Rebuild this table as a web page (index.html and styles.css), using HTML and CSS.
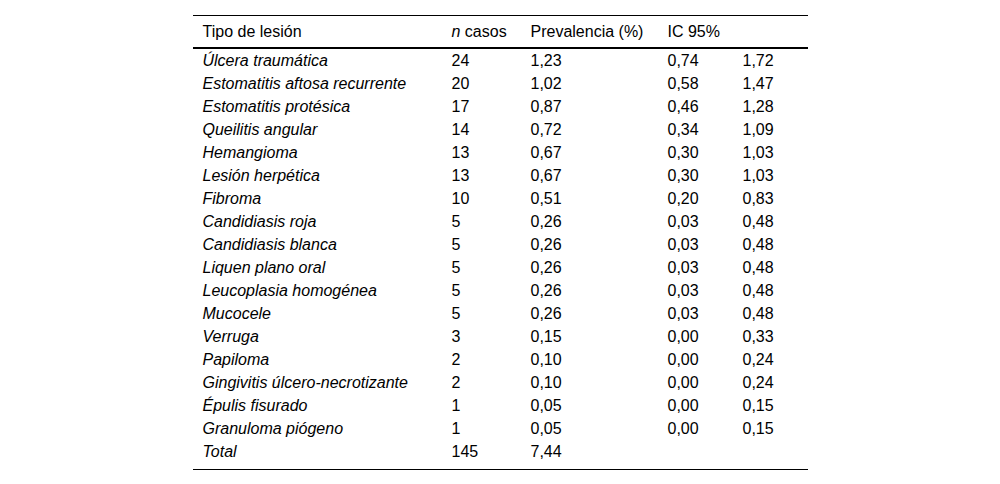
FILE: index.html
```html
<!DOCTYPE html>
<html lang="es">
<head>
<meta charset="utf-8">
<link rel="stylesheet" href="styles.css">
</head>
<body>
<table class="data">
  <colgroup>
    <col class="c1"><col class="c2"><col class="c3"><col class="c4"><col class="c5">
  </colgroup>
  <thead>
    <tr><th>Tipo de lesión</th><th><i>n</i> casos</th><th>Prevalencia (%)</th><th colspan="2">IC 95%</th></tr>
  </thead>
  <tbody>
    <tr><td class="name">Úlcera traumática</td><td>24</td><td>1,23</td><td>0,74</td><td>1,72</td></tr>
    <tr><td class="name">Estomatitis aftosa recurrente</td><td>20</td><td>1,02</td><td>0,58</td><td>1,47</td></tr>
    <tr><td class="name">Estomatitis protésica</td><td>17</td><td>0,87</td><td>0,46</td><td>1,28</td></tr>
    <tr><td class="name">Queilitis angular</td><td>14</td><td>0,72</td><td>0,34</td><td>1,09</td></tr>
    <tr><td class="name">Hemangioma</td><td>13</td><td>0,67</td><td>0,30</td><td>1,03</td></tr>
    <tr><td class="name">Lesión herpética</td><td>13</td><td>0,67</td><td>0,30</td><td>1,03</td></tr>
    <tr><td class="name">Fibroma</td><td>10</td><td>0,51</td><td>0,20</td><td>0,83</td></tr>
    <tr><td class="name">Candidiasis roja</td><td>5</td><td>0,26</td><td>0,03</td><td>0,48</td></tr>
    <tr><td class="name">Candidiasis blanca</td><td>5</td><td>0,26</td><td>0,03</td><td>0,48</td></tr>
    <tr><td class="name">Liquen plano oral</td><td>5</td><td>0,26</td><td>0,03</td><td>0,48</td></tr>
    <tr><td class="name">Leucoplasia homogénea</td><td>5</td><td>0,26</td><td>0,03</td><td>0,48</td></tr>
    <tr><td class="name">Mucocele</td><td>5</td><td>0,26</td><td>0,03</td><td>0,48</td></tr>
    <tr><td class="name">Verruga</td><td>3</td><td>0,15</td><td>0,00</td><td>0,33</td></tr>
    <tr><td class="name">Papiloma</td><td>2</td><td>0,10</td><td>0,00</td><td>0,24</td></tr>
    <tr><td class="name">Gingivitis úlcero-necrotizante</td><td>2</td><td>0,10</td><td>0,00</td><td>0,24</td></tr>
    <tr><td class="name">Épulis fisurado</td><td>1</td><td>0,05</td><td>0,00</td><td>0,15</td></tr>
    <tr><td class="name">Granuloma piógeno</td><td>1</td><td>0,05</td><td>0,00</td><td>0,15</td></tr>
    <tr class="last"><td class="name">Total</td><td>145</td><td>7,44</td><td></td><td></td></tr>
  </tbody>
</table>
</body>
</html>
```

FILE: styles.css
```css
html, body {
  margin: 0;
  padding: 0;
  background: #fff;
}
body {
  font-family: "Liberation Sans", Arial, sans-serif;
  font-size: 16px;
  color: #000;
}
.data {
  border-collapse: collapse;
  width: 615px;
  margin: 15px auto 0;
  table-layout: fixed;
  border-top: 1px solid #000;
  border-bottom: 1px solid #000;
}
.c1 { width: 249px; }
.c2 { width: 79px; }
.c3 { width: 137px; }
.c4 { width: 75px; }
.c5 { width: 75px; }
.data th {
  font-weight: normal;
  text-align: left;
  padding: 6px 10px;
  line-height: 19px;
  border-bottom: 2px solid #000;
}
.data td {
  text-align: left;
  padding: 2px 10px;
  line-height: 19px;
  white-space: nowrap;
}
.data tbody tr:first-child td {
  padding-top: 2px;
}
.data .name {
  font-style: italic;
}
.data tr.last td {
  padding-bottom: 8px;
}
```
